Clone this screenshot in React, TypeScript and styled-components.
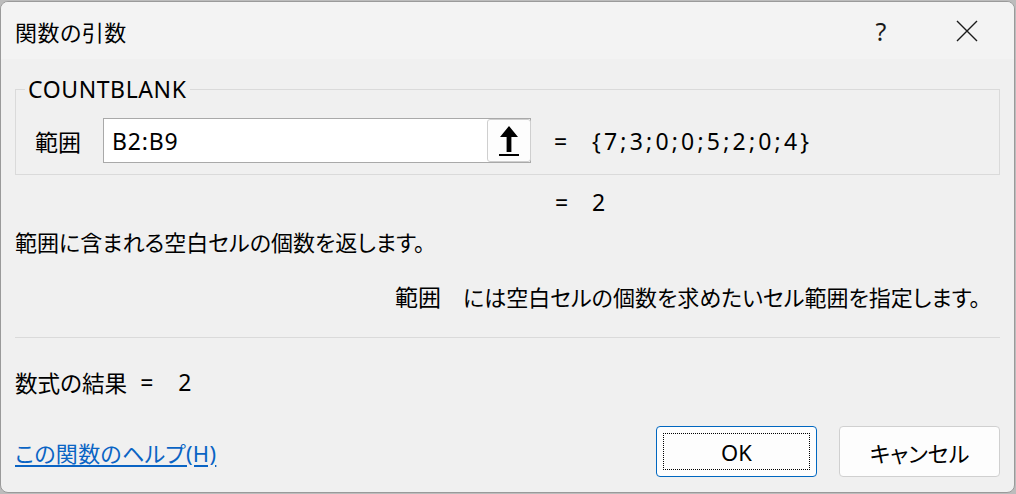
import React from "react";
import styled, { createGlobalStyle } from "styled-components";

const GlobalStyle = createGlobalStyle`
  html, body { margin: 0; padding: 0; background: #bcbcbc; }
  body {
    font-family: "Noto Sans", "Noto Sans CJK JP", sans-serif;
    color: #000;
  }
  * { box-sizing: border-box; }
`;

const Window = styled.div`
  width: 1015px;
  height: 492px;
  margin-top: 1px;
  border: 1px solid #9a9a9a;
  border-radius: 8px;
  background: #f0f0f0;
  display: flex;
  flex-direction: column;
  overflow: hidden;
`;

const TitleBar = styled.div`
  height: 57px;
  flex: none;
  background: #f3f3f3;
  display: flex;
  align-items: center;
  padding-left: 14px;
`;

const Title = styled.div`
  font-size: 22px;
  font-feature-settings: "palt";
  letter-spacing: 0.5px;
`;

const CaptionButton = styled.div<{ $ml?: number }>`
  width: 46px;
  height: 40px;
  display: flex;
  align-items: center;
  justify-content: center;
  margin-left: ${(p) => (p.$ml !== undefined ? `${p.$ml}px` : "auto")};
  font-size: 25px;
  font-weight: 400;
  color: #1a1a1a;
`;

const Content = styled.div`
  flex: 1;
  display: flex;
  flex-direction: column;
  padding: 0 14px 15px 14px;
  font-size: 22px;
  font-feature-settings: "palt";
`;

const GroupBox = styled.fieldset`
  margin: 19px 0 0 0;
  padding: 18px 0 11px 19px;
  border: 1px solid #dadada;
  min-width: 0;
`;

const Legend = styled.legend`
  margin-left: -10px;
  padding: 0 3px;
  font-size: 23px;
  line-height: 22px;
  letter-spacing: 0.6px;
`;

const ArgRow = styled.div`
  display: flex;
  align-items: center;
  height: 45px;
`;

const ArgLabel = styled.div`
  width: 68px;
  font-size: 23px;
`;

const InputBox = styled.div`
  width: 428px;
  height: 45px;
  border: 1px solid #a9a9a9;
  background: #fff;
  display: flex;
  align-items: center;
  padding-left: 8px;
  font-size: 23px;
  letter-spacing: 0.8px;
`;

const RefButton = styled.div`
  margin-left: auto;
  margin-right: -1px;
  width: 44px;
  height: 43px;
  border: 1px solid #cfcfcf;
  border-radius: 3px;
  background: #fdfdfd;
  display: flex;
  align-items: center;
  justify-content: center;
`;

const Equals = styled.span<{ $w: number; $ml?: number }>`
  display: inline-block;
  width: ${(p) => p.$w}px;
  margin-left: ${(p) => p.$ml ?? 0}px;
  font-size: 23px;
`;

const ValueText = styled.span`
  font-size: 23px;
  letter-spacing: 3.2px;
`;

const EvalRow = styled.div<{ $mt: number; $pl: number }>`
  margin-top: ${(p) => p.$mt}px;
  padding-left: ${(p) => p.$pl}px;
  height: 28px;
  display: flex;
  align-items: center;
  font-size: 22px;
  white-space: nowrap;
`;

const NumText = styled.span`
  font-size: 23px;
`;

const ResultLabel = styled.span`
  font-size: 22.6px;
`;

const ArgName = styled.span`
  display: inline-block;
  width: 68px;
  font-size: 23px;
`;

const Separator = styled.div`
  margin-top: 27px;
  height: 1px;
  background: #dadada;
`;

const Footer = styled.div`
  margin-top: auto;
  display: flex;
  align-items: center;
  gap: 22px;
`;

const HelpLink = styled.a`
  color: #0a64c4;
  text-decoration: underline;
  text-underline-offset: 3px;
  font-size: 22px;
  letter-spacing: 0.3px;
  margin-right: auto;
  cursor: pointer;
`;

const DialogButton = styled.div<{ $primary?: boolean }>`
  position: relative;
  width: 161px;
  height: 51px;
  border: 1px solid ${(p) => (p.$primary ? "#0067c0" : "#d0d0d0")};
  border-radius: 4px;
  background: #fdfdfd;
  display: flex;
  align-items: center;
  justify-content: center;
  font-size: 22px;

  ${(p) =>
    p.$primary &&
    `&::after {
      content: "";
      position: absolute;
      left: 6px; right: 6px; top: 6px; bottom: 6px;
      border: 1px dotted #000;
    }`}
`;

const TitleSpacer = styled.div`
  width: 24px;
`;

const ArrowIcon = () => (
  <svg width="22" height="34" viewBox="0 0 22 34">
    <polygon points="11,2 20,13 13.4,13 13.4,28 8.6,28 8.6,13 2,13" fill="#000" />
    <rect x="1" y="30" width="20" height="2" fill="#000" />
  </svg>
);

const CloseIcon = () => (
  <svg width="22" height="22" viewBox="0 0 22 22">
    <path d="M1 1 L21 21 M21 1 L1 21" stroke="#1a1a1a" strokeWidth="1.4" fill="none" />
  </svg>
);

export default function App() {
  return (
    <>
      <GlobalStyle />
      <Window>
        <TitleBar>
          <Title>関数の引数</Title>
          <CaptionButton>?</CaptionButton>
          <CaptionButton $ml={40}>
            <CloseIcon />
          </CaptionButton>
          <TitleSpacer />
        </TitleBar>
        <Content>
          <GroupBox>
            <Legend>COUNTBLANK</Legend>
            <ArgRow>
              <ArgLabel>範囲</ArgLabel>
              <InputBox>
                B2:B9
                <RefButton>
                  <ArrowIcon />
                </RefButton>
              </InputBox>
              <Equals $w={38} $ml={23}>=</Equals>
              <ValueText>{"{7;3;0;0;5;2;0;4}"}</ValueText>
            </ArgRow>
          </GroupBox>
          <EvalRow $mt={13} $pl={540}>
            <Equals $w={37}>=</Equals>
            <NumText>2</NumText>
          </EvalRow>
          <EvalRow $mt={11} $pl={0}>範囲に含まれる空白セルの個数を返します。</EvalRow>
          <EvalRow $mt={27} $pl={380}>
            <ArgName>範囲</ArgName>には空白セルの個数を求めたいセル範囲を指定します。
          </EvalRow>
          <Separator />
          <EvalRow $mt={30} $pl={0}>
            <ResultLabel>数式の結果</ResultLabel>
            <Equals $w={38} $ml={13}>=</Equals>
            <NumText>2</NumText>
          </EvalRow>
          <Footer>
            <HelpLink>この関数のヘルプ(H)</HelpLink>
            <DialogButton $primary>OK</DialogButton>
            <DialogButton>キャンセル</DialogButton>
          </Footer>
        </Content>
      </Window>
    </>
  );
}
